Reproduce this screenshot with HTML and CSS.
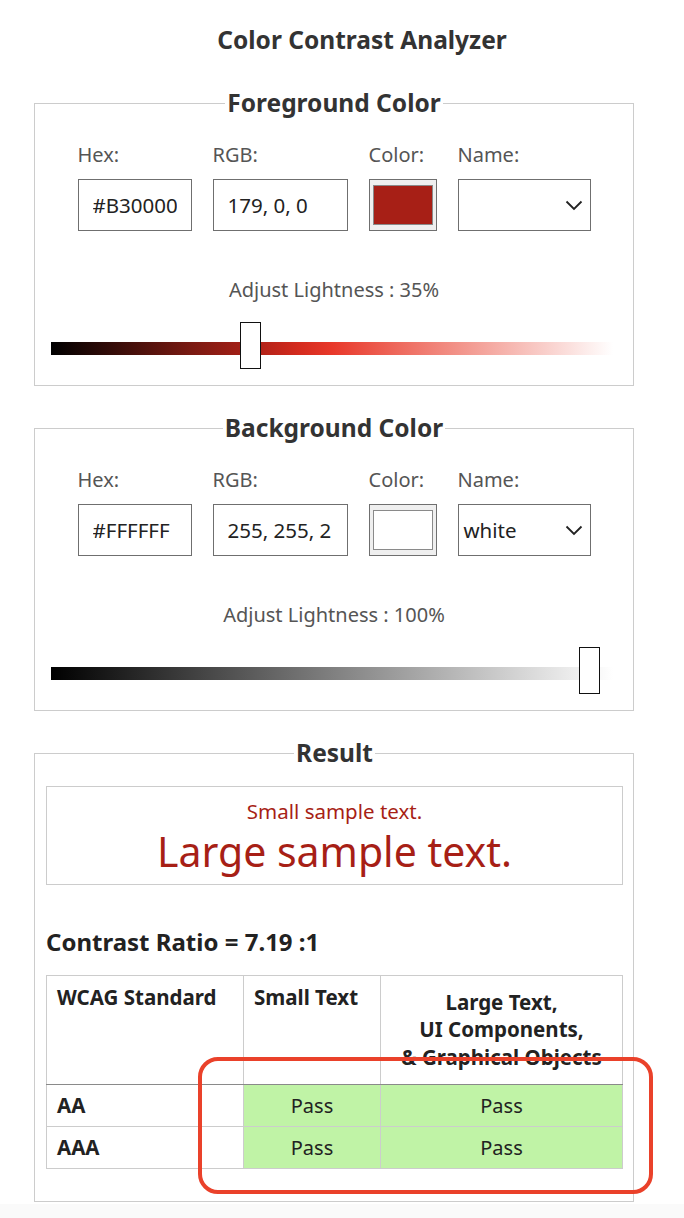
FILE: index.html
```html
<!DOCTYPE html>
<html lang="en">
<head>
<meta charset="utf-8">
<title>Color Contrast Analyzer</title>
<link rel="stylesheet" href="styles.css">
</head>
<body>
<div class="page">
  <h1 class="title">Color Contrast Analyzer</h1>

  <fieldset class="panel">
    <legend class="legend">Foreground Color</legend>
    <div class="fields">
      <div class="field">
        <span class="label">Hex:</span>
        <input class="box hex" type="text" value="#B30000" readonly>
      </div>
      <div class="field">
        <span class="label">RGB:</span>
        <input class="box rgb" type="text" value="179, 0, 0" readonly>
      </div>
      <div class="field">
        <span class="label">Color:</span>
        <div class="swatch-box"><div class="swatch swatch-fg"></div></div>
      </div>
      <div class="field">
        <span class="label">Name:</span>
        <div class="box select">
          <span class="select-text"></span>
          <svg class="chev" width="18" height="11" viewBox="0 0 18 11"><path d="M1.5 1.5 L9 9 L16.5 1.5" fill="none" stroke="#222" stroke-width="1.8"/></svg>
        </div>
      </div>
    </div>
    <div class="adjust">Adjust Lightness : 35%</div>
    <div class="slider">
      <div class="track track-fg"></div>
      <div class="thumb thumb-fg"></div>
    </div>
  </fieldset>

  <fieldset class="panel">
    <legend class="legend">Background Color</legend>
    <div class="fields">
      <div class="field">
        <span class="label">Hex:</span>
        <input class="box hex" type="text" value="#FFFFFF" readonly>
      </div>
      <div class="field">
        <span class="label">RGB:</span>
        <input class="box rgb" type="text" value="255, 255, 255" readonly>
      </div>
      <div class="field">
        <span class="label">Color:</span>
        <div class="swatch-box"><div class="swatch swatch-bg"></div></div>
      </div>
      <div class="field">
        <span class="label">Name:</span>
        <div class="box select">
          <span class="select-text">white</span>
          <svg class="chev" width="18" height="11" viewBox="0 0 18 11"><path d="M1.5 1.5 L9 9 L16.5 1.5" fill="none" stroke="#222" stroke-width="1.8"/></svg>
        </div>
      </div>
    </div>
    <div class="adjust">Adjust Lightness : 100%</div>
    <div class="slider">
      <div class="track track-bg"></div>
      <div class="thumb thumb-bg"></div>
    </div>
  </fieldset>

  <fieldset class="panel result">
    <legend class="legend">Result</legend>
    <div class="sample">
      <div class="sample-small">Small sample text.</div>
      <div class="sample-large">Large sample text.</div>
    </div>
    <div class="ratio">Contrast Ratio = 7.19 :1</div>
    <table class="wcag">
      <thead>
        <tr>
          <th class="c1 top">WCAG Standard</th>
          <th class="c2 top">Small Text</th>
          <th class="c3 mid">Large Text,<br>UI Components,<br>&amp; Graphical Objects</th>
        </tr>
      </thead>
      <tbody>
        <tr>
          <th class="rowh">AA</th>
          <td class="pass first">Pass</td>
          <td class="pass">Pass</td>
        </tr>
        <tr>
          <th class="rowh">AAA</th>
          <td class="pass first">Pass</td>
          <td class="pass">Pass</td>
        </tr>
      </tbody>
    </table>
  </fieldset>

  <div class="highlight"></div>
</div>
</body>
</html>
```

FILE: styles.css
```css
* { box-sizing: border-box; }

html, body {
  margin: 0;
  padding: 0;
}

body {
  background: #fafafa;
  font-family: "Noto Sans", "Open Sans", sans-serif;
  color: #333;
}

.page {
  position: relative;
  width: 684px;
  background: #fff;
  padding: 25px 0 2px 0;
}

.title {
  margin: 0 0 0 40px;
  text-align: center;
  font-size: 24.5px;
  line-height: 30px;
  font-weight: 700;
  color: #333;
}

.panel {
  margin: 27px 0 0 34px;
  width: 600px;
  border: 1px solid #cccccc;
  padding: 25px 0 16px 0;
  min-width: 0;
}

.title + .panel {
  margin-top: 33px;
}

.legend {
  margin: 0 auto;
  padding: 0 2px;
  font-size: 24.5px;
  line-height: 30px;
  font-weight: 700;
  color: #333;
}

.fields {
  display: flex;
  justify-content: center;
  gap: 21px;
}

.field {
  display: flex;
  flex-direction: column;
  gap: 12px;
}

.label {
  font-size: 20px;
  line-height: 24px;
  color: #555;
}

.box {
  height: 52px;
  border: 1px solid #6f6f6f;
  background: #fff;
  font-family: "Noto Sans", "Open Sans", sans-serif;
  font-size: 20.5px;
  color: #222;
  padding: 0 14px;
  margin: 0;
  border-radius: 0;
  outline: none;
}

.hex { width: 114px; }
.rgb { width: 135px; padding-right: 16px; }

.select {
  width: 133px;
  display: flex;
  align-items: center;
  justify-content: space-between;
  padding: 0 7px 0 5px;
}

.chev {
  display: block;
}

.swatch-box {
  width: 68px;
  height: 52px;
  border: 1px solid #6f6f6f;
  background: #efefef;
  padding: 5px 3px;
}

.swatch {
  width: 100%;
  height: 100%;
  border: 1px solid #8a8a8a;
}

.swatch-fg { background: #a71f16; }
.swatch-bg { background: #ffffff; }

.adjust {
  margin-top: 47px;
  text-align: center;
  font-size: 20px;
  line-height: 24px;
  color: #555;
}

.slider {
  position: relative;
  margin: 20px 0 0 16px;
  padding-top: 20px;
  width: 562px;
  height: 47px;
}

.track {
  height: 13px;
  width: 100%;
}

.track-fg {
  background: linear-gradient(to right,
    #000000 0%,
    #3a0d09 12%,
    #7a1a12 25%,
    #a71f16 35%,
    #d42b1e 44%,
    #e8382a 50%,
    #ee6a5e 62%,
    #f39d94 75%,
    #f9cfcb 88%,
    #ffffff 100%);
}

.track-bg {
  background: linear-gradient(to right, #000000 0%, #ffffff 100%);
}

.thumb {
  position: absolute;
  top: 0;
  width: 21px;
  height: 47px;
  background: #fff;
  border: 1px solid #111;
}

.thumb-fg { left: 189px; }
.thumb-bg { left: 528px; }

.result {
  padding: 18px 10px 32px 11px;
}

.sample {
  border: 1px solid #cccccc;
  text-align: center;
  color: #a71f16;
  padding: 12px 0 10px 0;
}

.sample-small {
  font-size: 20.5px;
  line-height: 24px;
}

.sample-large {
  margin-top: 5px;
  font-size: 41px;
  line-height: 46px;
}

.ratio {
  margin-top: 43px;
  font-size: 24px;
  line-height: 28px;
  font-weight: 700;
  color: #222;
}

.wcag {
  margin-top: 19px;
  width: 576px;
  border-collapse: collapse;
  table-layout: fixed;
  font-size: 20px;
  color: #222;
}

.wcag th, .wcag td {
  border: 1px solid #cccccc;
  line-height: 27.5px;
  padding: 0 10px;
}

.c1 { width: 197px; }
.c2 { width: 137px; }
.c3 { width: 242px; }

.wcag thead th {
  height: 109px;
  font-size: 20.5px;
  font-weight: 700;
  border-bottom: 1px solid #8a8a8a;
}

.top {
  vertical-align: top;
  text-align: left;
  padding-top: 8px !important;
}

.mid {
  vertical-align: middle;
  text-align: center;
}

.wcag tbody tr {
  height: 42px;
}

.rowh {
  text-align: left;
  font-weight: 700;
  font-size: 20.5px;
}

.pass {
  text-align: center;
  background: #c0f3a6;
}

.pass.first {
  border-left: 1px solid #8a8a8a;
}

.highlight {
  position: absolute;
  left: 198px;
  top: 1057px;
  width: 455px;
  height: 137px;
  border: 4px solid #ea412a;
  border-radius: 20px;
  pointer-events: none;
}
```
